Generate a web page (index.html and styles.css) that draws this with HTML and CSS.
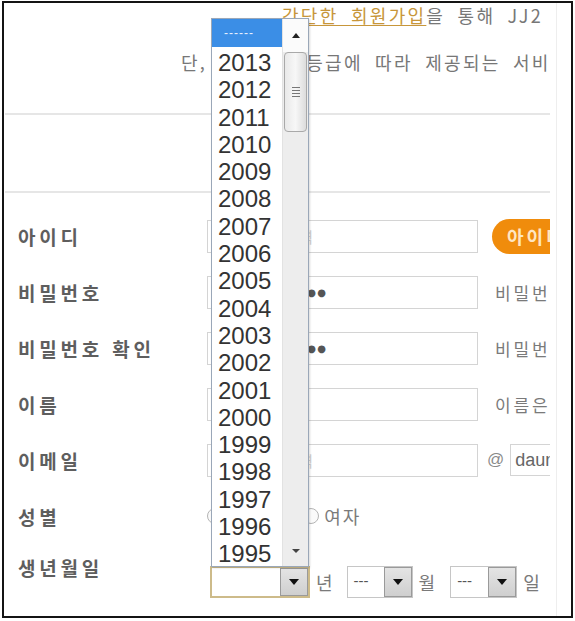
FILE: index.html
```html
<!DOCTYPE html>
<html lang="ko">
<head>
<meta charset="utf-8">
<title>회원가입</title>
<link rel="stylesheet" href="styles.css">
</head>
<body>
<div class="frame">
  <div class="page">
    <div class="intro">
      <p class="intro-line intro-first"><a class="join-link">간단한 회원가입</a>을 통해 JJ2 회원이 되어 보세요.</p>
      <p class="intro-line intro-second">단,<span class="masked">회원</span>등급에 따라 제공되는 서비스가 다를 수 있습니다.</p>
    </div>
    <div class="rule rule-top"></div>
    <div class="rule rule-bottom"></div>
    <div class="form">
      <div class="row">
        <div class="label">아이디</div>
        <div class="field">
          <span class="input input-main"><span class="placeholder">아이디를 입력</span></span>
          <span class="btn-check">아이디 중복확인</span>
        </div>
      </div>
      <div class="row">
        <div class="label">비밀번호</div>
        <div class="field">
          <span class="input input-main"><span class="dots">●●●●●●●●●●●</span></span>
          <span class="note">비밀번호는 영문, 숫자 조합</span>
        </div>
      </div>
      <div class="row">
        <div class="label">비밀번호 확인</div>
        <div class="field">
          <span class="input input-main"><span class="dots">●●●●●●●●●●●</span></span>
          <span class="note">비밀번호를 한번 더 입력</span>
        </div>
      </div>
      <div class="row">
        <div class="label">이름</div>
        <div class="field">
          <span class="input input-main"></span>
          <span class="note">이름은 실명으로 입력</span>
        </div>
      </div>
      <div class="row">
        <div class="label">이메일</div>
        <div class="field">
          <span class="input input-main"><span class="placeholder">이메일을 입력</span></span>
          <span class="at">@</span>
          <span class="input input-domain">daum.net</span>
        </div>
      </div>
      <div class="row">
        <div class="label">성별</div>
        <div class="field">
          <span class="radio"></span><span class="radio-text">남자</span>
          <span class="radio radio-second"></span><span class="radio-text">여자</span>
        </div>
      </div>
      <div class="row row-birth">
        <div class="label">생년월일</div>
        <div class="field">
          <span class="select select-year select-focus"><span class="select-value"></span><span class="select-arrow"></span></span>
          <span class="unit">년</span>
          <span class="select select-month"><span class="select-value">---</span><span class="select-arrow"></span></span>
          <span class="unit">월</span>
          <span class="select select-day"><span class="select-value">---</span><span class="select-arrow"></span></span>
          <span class="unit">일</span>
        </div>
      </div>
    </div>
  </div>
  <div class="page-edge"></div>

  <div class="listbox">
    <div class="options">
      <div class="option option-selected">------</div>
      <div class="option">2013</div>
      <div class="option">2012</div>
      <div class="option">2011</div>
      <div class="option">2010</div>
      <div class="option">2009</div>
      <div class="option">2008</div>
      <div class="option">2007</div>
      <div class="option">2006</div>
      <div class="option">2005</div>
      <div class="option">2004</div>
      <div class="option">2003</div>
      <div class="option">2002</div>
      <div class="option">2001</div>
      <div class="option">2000</div>
      <div class="option">1999</div>
      <div class="option">1998</div>
      <div class="option">1997</div>
      <div class="option">1996</div>
      <div class="option">1995</div>
    </div>
    <div class="scrollbar">
      <div class="scroll-btn"><span class="tri-up"></span></div>
      <div class="thumb"><span class="grip"></span><span class="grip"></span><span class="grip"></span><span class="grip"></span></div>
      <div class="track"></div>
      <div class="scroll-btn scroll-btn-down"><span class="tri-down"></span></div>
    </div>
  </div>
</div>
</body>
</html>
```

FILE: styles.css
```css
html, body {
  margin: 0;
  padding: 0;
  background: #ffffff;
}

body {
  font-family: "Noto Sans CJK KR", "Noto Sans", sans-serif;
  color: #666666;
}

.frame {
  position: relative;
  display: flex;
  margin: 1px 0 0 2px;
  width: 567px;
  height: 613px;
  border: 2px solid #141414;
  background: #ffffff;
  overflow: hidden;
}

.page {
  width: 546px;
  height: 613px;
  flex: none;
  overflow: hidden;
  white-space: nowrap;
}

.page-edge {
  width: 1px;
  margin-left: 6px;
  background: #eeeeee;
}

/* intro */
.intro {
  height: 110px;
}

.intro-line {
  margin: 0;
  font-size: 18px;
  line-height: 24px;
  letter-spacing: 2.3px;
  word-spacing: 5px;
  color: #777777;
}

.intro-first {
  padding-left: 278px;
}

.join-link {
  color: #c7963a;
  text-decoration: underline;
  text-underline-offset: 2px;
}

.intro-second {
  margin-top: 23px;
  padding-left: 177px;
}

.masked {
  display: inline-block;
  box-sizing: border-box;
  width: 99px;
  padding-left: 14px;
  overflow: hidden;
  vertical-align: top;
}

.rule {
  height: 2px;
  background: #e6e6e6;
  margin-left: 1px;
}

.rule-bottom {
  margin-top: 76px;
}

/* form */
.form {
  margin-top: 15px;
}

.row {
  display: flex;
  align-items: center;
  height: 56px;
}

.label {
  width: 189px;
  padding-left: 14px;
  flex: none;
  font-size: 19px;
  font-weight: bold;
  letter-spacing: 3.8px;
  color: #5e5e5e;
}

.field {
  display: flex;
  align-items: center;
  flex: none;
}

.input {
  box-sizing: border-box;
  display: flex;
  align-items: center;
  height: 33px;
  border: 1px solid #d4d4d4;
  background: #ffffff;
  overflow: hidden;
}

.input-main {
  width: 271px;
}

.placeholder {
  padding-left: 18px;
  font-size: 15px;
  color: #d2d2d2;
}

.dots {
  padding-left: 8px;
  font-family: "DejaVu Sans", sans-serif;
  font-size: 10px;
  letter-spacing: 1.4px;
  color: #555555;
}

.btn-check {
  display: flex;
  align-items: center;
  height: 35px;
  margin-left: 14px;
  padding-left: 15px;
  padding-right: 20px;
  border-radius: 18px;
  background: #f08c0c;
  color: #ffe6c2;
  font-size: 18px;
  font-weight: bold;
  letter-spacing: 3px;
}

.note {
  margin-left: 17px;
  font-size: 17px;
  letter-spacing: 2.8px;
  color: #7a7a7a;
}

.at {
  margin-left: 9px;
  font-family: "Liberation Sans", sans-serif;
  font-size: 17px;
  color: #8a8a8a;
}

.input-domain {
  width: 90px;
  height: 32px;
  margin-left: 6px;
  padding-left: 4px;
  font-family: "Liberation Sans", sans-serif;
  font-size: 18px;
  color: #666666;
}

.radio {
  box-sizing: border-box;
  width: 16px;
  height: 16px;
  border: 1px solid #b4b4b4;
  border-radius: 50%;
  background: #fafafa;
}

.radio-second {
  margin-left: 38px;
}

.radio-text {
  margin-left: 5px;
  font-size: 18px;
  letter-spacing: 2px;
  color: #7a7a7a;
}

/* birth row */
.row-birth {
  align-items: flex-start;
}

.row-birth .label {
  padding-top: 10px;
  line-height: 28px;
}

.row-birth .field {
  padding-top: 22px;
}

.select {
  box-sizing: border-box;
  display: flex;
  height: 32px;
  border: 1px solid #c6c6c6;
  background: #ffffff;
}

.select-focus {
  border: 2px solid #cdbb8a;
}

.select-year {
  width: 100px;
  margin-left: 3px;
}

.select-month {
  width: 66px;
  margin-left: 14px;
}

.select-day {
  width: 67px;
  margin-left: 15px;
}

.select-value {
  flex: 1;
  padding-left: 6px;
  font-family: "Liberation Sans", sans-serif;
  font-size: 15px;
  line-height: 28px;
  color: #555555;
}

.select-arrow {
  position: relative;
  width: 26px;
  border: 1px solid #9a9a9a;
  background: linear-gradient(#e4e4e4, #cfcfcf);
}

.select-arrow::after {
  content: "";
  position: absolute;
  left: 50%;
  top: 50%;
  margin-left: -5px;
  margin-top: -3px;
  border-left: 5px solid transparent;
  border-right: 5px solid transparent;
  border-top: 6px solid #111111;
}

.unit {
  margin-left: 6px;
  font-size: 18px;
  line-height: 30px;
  color: #7a7a7a;
}

/* open listbox */
.listbox {
  position: absolute;
  left: 207px;
  top: 15px;
  width: 96px;
  height: 547px;
  display: flex;
  border: 1px solid #9aa7b8;
  background: #ffffff;
  box-shadow: 1px 1px 2px rgba(0, 0, 0, 0.15);
}

.options {
  width: 70px;
  flex: none;
}

.option {
  height: 27.3px;
  padding-left: 6px;
  font-family: "Liberation Sans", sans-serif;
  font-size: 24px;
  line-height: 27.3px;
  color: #333333;
}

.option-selected {
  height: 28px;
  margin-bottom: 2px;
  background: #3b8ee6;
  color: #e8f2ff;
  font-size: 12px;
  line-height: 28px;
  letter-spacing: 1px;
  padding-left: 12px;
}

.scrollbar {
  flex: 1;
  display: flex;
  flex-direction: column;
  background: #ededed;
  border-left: 1px solid #e2e2e2;
}

.scroll-btn {
  height: 33px;
  display: flex;
  align-items: center;
  justify-content: center;
  background: #fbfbfb;
}

.scroll-btn-down {
  height: 30px;
  background: #ededed;
}

.tri-up {
  border-left: 4px solid transparent;
  border-right: 4px solid transparent;
  border-bottom: 5px solid #222222;
}

.tri-down {
  border-left: 4px solid transparent;
  border-right: 4px solid transparent;
  border-top: 4px solid #444444;
}

.thumb {
  box-sizing: border-box;
  height: 80px;
  margin: 0 1px;
  display: flex;
  flex-direction: column;
  align-items: center;
  justify-content: center;
  gap: 2px;
  border: 1px solid #a9a9a9;
  border-radius: 4px;
  background: linear-gradient(90deg, #e9e9e9, #f7f7f7 50%, #dcdcdc);
}

.grip {
  display: block;
  width: 8px;
  height: 1px;
  background: #777777;
}

.track {
  flex: 1;
}
```
